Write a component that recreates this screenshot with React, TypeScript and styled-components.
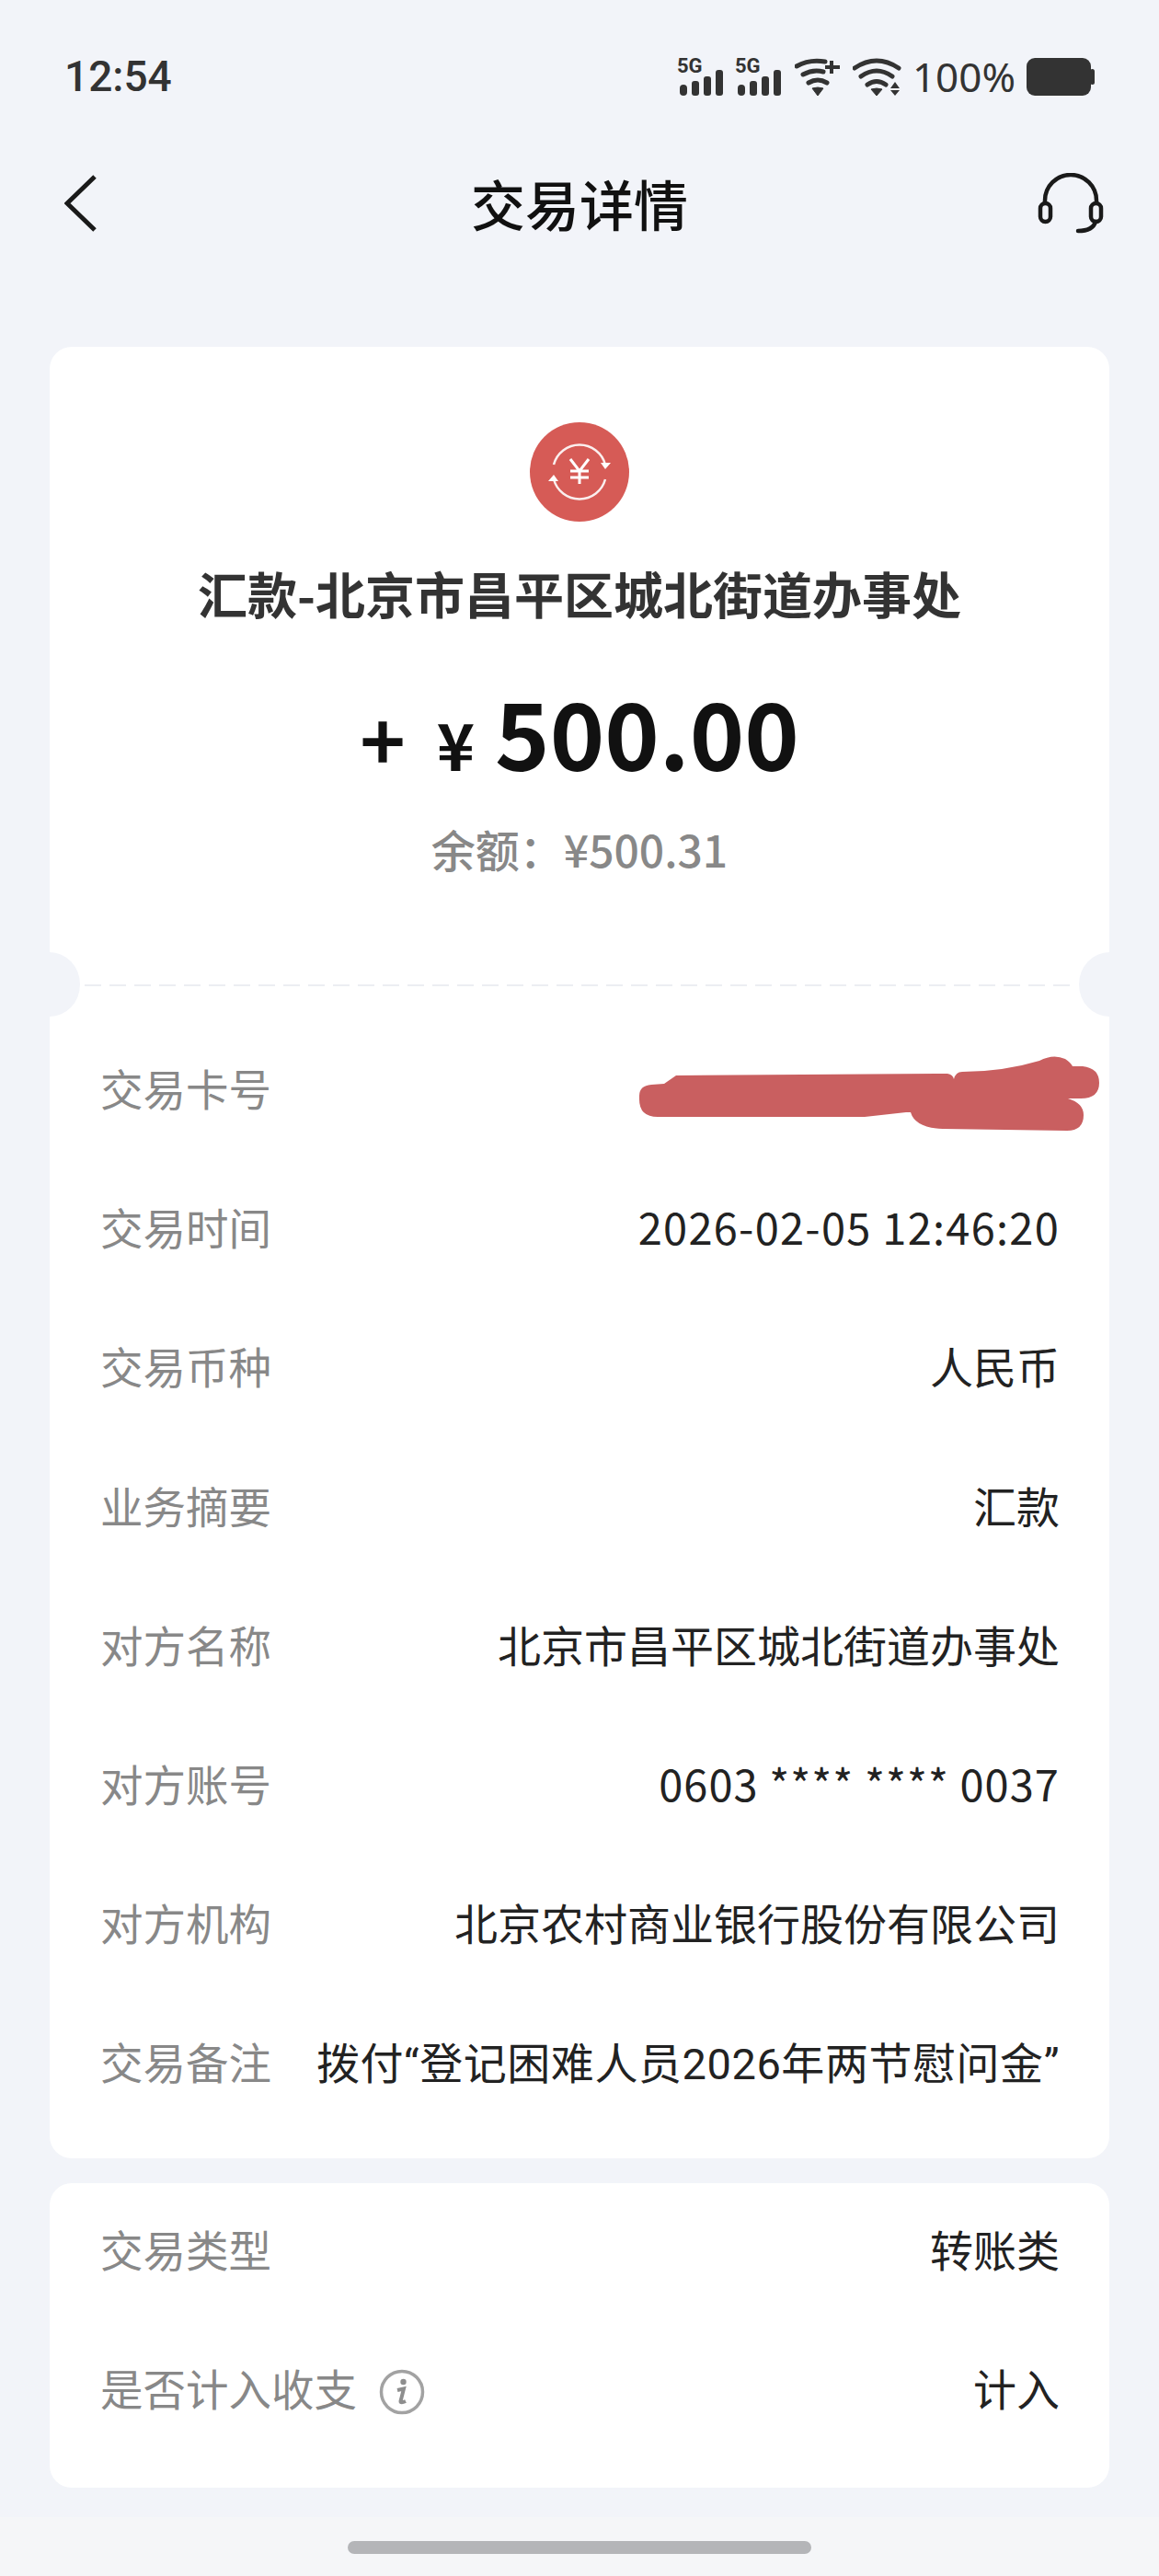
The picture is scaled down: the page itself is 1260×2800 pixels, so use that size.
import styled, { createGlobalStyle } from "styled-components";

const GlobalStyle = createGlobalStyle`
  html, body {
    margin: 0;
    padding: 0;
    background: #f2f4f9;
  }
`;

const FONT = `Roboto, "Noto Sans CJK SC", sans-serif`;
const CJK_FONT = `"Noto Sans CJK SC", sans-serif`;

const Page = styled.div`
  width: 1260px;
  height: 2800px;
  background: #f2f4f9;
  font-family: ${FONT};
  overflow: hidden;
`;

const StatusBar = styled.div`
  height: 166px;
  padding: 0 70px;
  box-sizing: border-box;
  display: flex;
  align-items: center;
  justify-content: space-between;
  color: #333;
`;

const Time = styled.span`
  font-size: 46px;
  font-weight: 500;
`;

const StatusIcons = styled.div`
  display: flex;
  align-items: center;
`;

const SignalCell = styled.div`
  position: relative;
  width: 50px;
  height: 41px;
  margin-right: 13px;
`;

const SignalTag = styled.span`
  position: absolute;
  top: 0;
  left: 0;
  font-size: 22px;
  line-height: 18px;
  font-weight: 700;
`;

const Percent = styled.span`
  font-size: 44px;
  margin: 0 12px;
  font-family: "Noto Sans", sans-serif;
  line-height: 41px;
`;

const NavBar = styled.div`
  height: 110px;
  padding: 0 60px 0 70px;
  display: grid;
  grid-template-columns: 1fr auto 1fr;
  align-items: center;

  & > svg:last-child {
    justify-self: end;
  }
`;

const NavTitle = styled.h1`
  margin: 0 10px 2px 0;
  font-size: 59px;
  font-weight: 500;
  color: #111;
`;

const Cards = styled.div`
  margin: 101px 54px 0;
  display: flex;
  flex-direction: column;
  gap: 27px;
`;

const Card = styled.section<{ $bottom: number }>`
  position: relative;
  background: #fff;
  border-radius: 24px;
  padding-bottom: ${(p) => p.$bottom}px;
`;

const Summary = styled.div`
  display: flex;
  flex-direction: column;
  align-items: center;
  padding-top: 82px;
  font-family: ${CJK_FONT};
`;

const Badge = styled.svg`
  width: 108px;
  height: 108px;
`;

const Payee = styled.div`
  margin-top: 42px;
  font-size: 54px;
  line-height: 72px;
  font-weight: 700;
  color: #333;
`;

const Amount = styled.div`
  margin-top: 53px;
  display: flex;
  align-items: baseline;
  height: 120px;
  line-height: 120px;
  color: #111;
  font-weight: 700;
`;

const Sign = styled.span`
  font-size: 84px;
  margin-right: 34px;
`;

const Yen = styled.span`
  font-size: 70px;
  margin-right: 22px;
`;

const Digits = styled.span`
  font-size: 101px;
`;

const Balance = styled.div`
  margin-top: 38px;
  font-size: 48px;
  line-height: 60px;
  font-weight: 500;
  color: #888;
`;

const Ticket = styled.div`
  position: relative;
  margin-top: 118px;
  margin-bottom: 39px;
  height: 2px;
  background-image: repeating-linear-gradient(
    90deg,
    #eceef2 0 18px,
    transparent 18px 27px
  );
  background-size: calc(100% - 76px) 2px;
  background-position: center;
  background-repeat: no-repeat;

  &::before,
  &::after {
    content: "";
    position: absolute;
    top: -35px;
    width: 66px;
    height: 70px;
    border-radius: 50%;
    background: #f2f4f9;
  }

  &::before {
    left: -33px;
    clip-path: inset(0 0 0 33px);
  }

  &::after {
    right: -33px;
    clip-path: inset(0 33px 0 0);
  }
`;

const Row = styled.div`
  height: 151.2px;
  padding: 0 54px 0 55px;
  display: flex;
  align-items: center;
  justify-content: space-between;
  font-size: 47px;
`;

const Label = styled.span`
  display: flex;
  align-items: center;
  gap: 24px;
  color: #888;
  font-size: 46.5px;
  margin-bottom: 10px;
`;

const Value = styled.span<{ $spacing?: number; $cjk?: boolean }>`
  color: #222;
  margin-bottom: 10px;
  letter-spacing: ${(p) => p.$spacing ?? 0}px;
  font-family: ${(p) => (p.$cjk ? CJK_FONT : FONT)};
`;

const Scribble = styled.svg`
  width: 511px;
  height: 84px;
  margin-right: -49px;
  margin-top: 4px;
`;

const HomeZone = styled.div`
  height: 65px;
  margin-top: 32px;
  background: #f5f6f8;
  display: flex;
  justify-content: center;
  padding-top: 26px;
  box-sizing: border-box;
`;

const HomeBar = styled.div`
  width: 504px;
  height: 14px;
  border-radius: 7px;
  background: #b4b5b8;
`;

const Signal = () => (
  <SignalCell>
    <SignalTag>5G</SignalTag>
    <svg width="50" height="41" viewBox="0 0 50 41">
      <rect x="3" y="29" width="8" height="12" rx="4" fill="#333" />
      <rect x="16" y="25" width="8" height="16" rx="3" fill="#333" />
      <rect x="29" y="20" width="8" height="21" rx="3" fill="#333" />
      <rect x="42" y="13" width="8" height="28" rx="3" fill="#333" />
    </svg>
  </SignalCell>
);

const WifiPlus = () => (
  <svg width="50" height="41" viewBox="0 0 50 41" style={{ marginLeft: 2, marginRight: 13 }}>
    <g fill="none" stroke="#333" strokeWidth="5" strokeLinecap="round">
      <path d="M2 9 Q16 1 33 4" />
      <path d="M9 18 Q20 12 31 15" />
      <path d="M15 27 Q25 21 35 27" />
      <path d="M40 3 V17 M33 10 H49" strokeWidth="4" strokeLinecap="butt" />
    </g>
    <path d="M19 33 Q25 31 31 33 L25 41 Z" fill="#333" stroke="#333" strokeLinejoin="round" />
  </svg>
);

const WifiData = () => (
  <svg width="53" height="41" viewBox="0 0 53 41">
    <g fill="none" stroke="#333" strokeWidth="5" strokeLinecap="round">
      <path d="M2 11 Q26 -5 50 11" />
      <path d="M9 20 Q26 8 43 20" />
      <path d="M16 29 Q26 22 36 29" />
    </g>
    <path d="M20 34 Q26 32 32 34 L26 41 Z" fill="#333" stroke="#333" strokeLinejoin="round" />
    <path d="M46 26 L51 33 H41 Z M41 35 H51 L46 41 Z" fill="#333" />
  </svg>
);

const Battery = () => (
  <svg width="74" height="41" viewBox="0 0 74 41">
    <rect x="0" y="0" width="70" height="41" rx="9" fill="#333" />
    <rect x="69" y="12" width="5" height="17" rx="2.5" fill="#333" />
  </svg>
);

const BackIcon = () => (
  <svg width="36" height="64" viewBox="0 0 36 64">
    <path d="M33 3 L3 32 L33 61" fill="none" stroke="#1a1a1a" strokeWidth="5" />
  </svg>
);

const HeadsetIcon = () => (
  <svg width="72" height="66" viewBox="0 0 72 66" fill="none" stroke="#1a1a1a" strokeWidth="4.5">
    <path d="M8 33 V30 A28 28 0 0 1 64 30 V33" />
    <rect x="3" y="33" width="11" height="20" rx="5.5" />
    <rect x="58" y="33" width="11" height="20" rx="5.5" />
    <path d="M63 53 Q60 63 44 63" strokeLinecap="round" />
  </svg>
);

const TransferBadge = () => (
  <Badge viewBox="0 0 108 108">
    <circle cx="54" cy="54" r="54" fill="#d65b56" />
    <g fill="none" stroke="#fff" strokeWidth="2.5" opacity="0.9">
      <path d="M26 46 A29 29 0 0 1 82 46" />
      <path d="M26 62 A29 29 0 0 0 82 62" />
    </g>
    <path d="M77 44 L88 44 L82 51 Z M20 64 L31 64 L26 57 Z" fill="#fff" />
    <path
      d="M44 40 L54 53 L64 40 M54 53 V67 M44 53 H64 M44 60 H64"
      fill="none"
      stroke="#fff"
      strokeWidth="3"
    />
  </Badge>
);

const InfoIcon = () => (
  <svg width="50" height="50" viewBox="0 0 50 50" style={{ marginTop: 12 }}>
    <circle cx="25" cy="25" r="22.5" fill="none" stroke="#a2a2a2" strokeWidth="3.5" />
    <circle cx="26.5" cy="14" r="3.2" fill="#8e8e8e" />
    <path d="M20 23 L27 21.5 L23.5 35 Q23.5 37.5 29 35" fill="none" stroke="#8e8e8e" strokeWidth="4" />
  </svg>
);

const RedactionMark = () => (
  <Scribble viewBox="0 0 511 84">
    <path
      d="M5 44 Q5 33 18 32 L32 31 L45 22 L340 20 Q346 21 347 26 Q349 18 356 18 Q400 18 440 6 Q455 -2 468 4 Q474 8 476 12 L487 12 Q505 14 505 30 Q505 47 485 47 L471 47 Q488 52 488 65 Q488 82 470 82 L335 80 Q305 79 300 62 L295 62 L250 67 L25 67 Q5 67 5 48 Z"
      fill="#c95f60"
    />
  </Scribble>
);

type Detail = { label: string; value: string; spacing?: number; cjk?: boolean };

const DETAILS: Detail[] = [
  { label: "交易时间", value: "2026-02-05 12:46:20", spacing: 1.25, cjk: true },
  { label: "交易币种", value: "人民币" },
  { label: "业务摘要", value: "汇款" },
  { label: "对方名称", value: "北京市昌平区城北街道办事处" },
  { label: "对方账号", value: "0603 **** **** 0037", spacing: 1.05, cjk: true },
  { label: "对方机构", value: "北京农村商业银行股份有限公司" },
  { label: "交易备注", value: "拨付“登记困难人员2026年两节慰问金”", spacing: 0.55 },
];

export default function App() {
  return (
    <Page>
      <GlobalStyle />
      <StatusBar>
        <Time>12:54</Time>
        <StatusIcons>
          <Signal />
          <Signal />
          <WifiPlus />
          <WifiData />
          <Percent>100%</Percent>
          <Battery />
        </StatusIcons>
      </StatusBar>

      <NavBar>
        <BackIcon />
        <NavTitle>交易详情</NavTitle>
        <HeadsetIcon />
      </NavBar>

      <Cards>
        <Card $bottom={25}>
          <Summary>
            <TransferBadge />
            <Payee>汇款-北京市昌平区城北街道办事处</Payee>
            <Amount>
              <Sign>+</Sign>
              <Yen>¥</Yen>
              <Digits>500.00</Digits>
            </Amount>
            <Balance>余额：¥500.31</Balance>
          </Summary>
          <Ticket />
          <Row>
            <Label>交易卡号</Label>
            <RedactionMark />
          </Row>
          {DETAILS.map((item) => (
            <Row key={item.label}>
              <Label>{item.label}</Label>
              <Value $spacing={item.spacing} $cjk={item.cjk}>
                {item.value}
              </Value>
            </Row>
          ))}
        </Card>
        <Card $bottom={29}>
          <Row>
            <Label>交易类型</Label>
            <Value>转账类</Value>
          </Row>
          <Row>
            <Label>
              是否计入收支
              <InfoIcon />
            </Label>
            <Value>计入</Value>
          </Row>
        </Card>
      </Cards>

      <HomeZone>
        <HomeBar />
      </HomeZone>
    </Page>
  );
}
